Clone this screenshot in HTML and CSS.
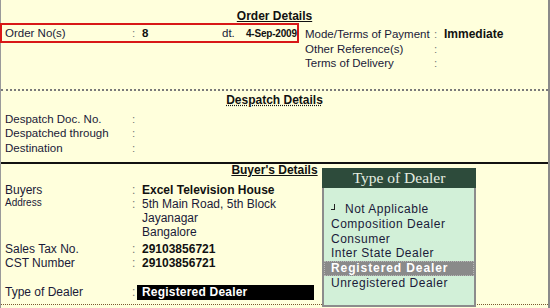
FILE: index.html
```html
<!DOCTYPE html>
<html lang="en">
<head>
    <meta charset="UTF-8">
    <title>Order Details</title>
    <link rel="stylesheet" href="styles.css">
</head>
<body>
    <div class="voucher">
        <section class="order">
            <h2 class="section-title">Order Details</h2>
            <div class="order-grid">
                <div class="order-no">
                    <span>Order No(s)</span>
                    <span class="colon">:</span>
                    <span class="value">8</span>
                    <span>dt.</span>
                    <span class="date">4-Sep-2009</span>
                </div>
                <div class="order-terms">
                    <span>Mode/Terms of Payment</span><span class="colon">:</span><span class="value">Immediate</span>
                    <span>Other Reference(s)</span><span class="colon">:</span><span></span>
                    <span>Terms of Delivery</span><span class="colon">:</span><span></span>
                </div>
            </div>
        </section>

        <section class="despatch">
            <h2 class="section-title dotted">Despatch Details</h2>
            <div class="rows">
                <span>Despatch Doc. No.</span><span class="colon">:</span><span></span>
                <span>Despatched through</span><span class="colon">:</span><span></span>
                <span>Destination</span><span class="colon">:</span><span></span>
            </div>
        </section>

        <section class="buyer">
            <h2 class="section-title">Buyer's Details</h2>
            <div class="rows">
                <span>Buyers</span><span class="colon">:</span><span class="value">Excel Television House</span>
                <span class="small">Address</span><span class="colon">:</span>
                <span class="address">5th Main Road, 5th Block<br>Jayanagar<br>Bangalore</span>
                <span class="gap">Sales Tax No.</span><span class="colon gap">:</span><span class="value gap">29103856721</span>
                <span>CST Number</span><span class="colon">:</span><span class="value">29103856721</span>
                <span class="gap-lg">Type of Dealer</span><span class="colon gap-lg">:</span><span class="value selected gap-lg">Registered Dealer</span>
            </div>
        </section>

        <div class="popup">
            <div class="popup-head">Type of Dealer</div>
            <ul class="popup-list">
                <li><span class="end-mark"></span>Not Applicable</li>
                <li>Composition Dealer</li>
                <li>Consumer</li>
                <li>Inter State Dealer</li>
                <li class="current">Registered Dealer</li>
                <li>Unregistered Dealer</li>
            </ul>
        </div>
    </div>
</body>
</html>
```

FILE: styles.css
```css
body {
    margin: 0;
    font-family: "Liberation Sans", Arial, sans-serif;
    color: #1a1a38;
    background: #fff;
}
.voucher {
    position: relative;
    width: 550px;
    height: 308px;
    box-sizing: border-box;
    background: #ffffdc;
    border-left: 1px solid #9a9a9a;
    border-right: 2px solid #8a8a8a;
}
.section-title {
    margin: 0;
    font-size: 12px;
    font-weight: bold;
    line-height: 14px;
    text-align: center;
    text-decoration: underline;
    color: #111;
}
.section-title.dotted {
    text-decoration-style: dotted;
}
.colon {
    color: #777;
}
.value {
    font-weight: bold;
    color: #111;
}

/* order */
.order {
    height: 89px;
    border-bottom: 2px dotted #7a7a7a;
}
.order .section-title {
    padding-top: 9px;
}
.order-grid {
    display: flex;
    align-items: flex-start;
}
.order-no {
    width: 299px;
    height: 20px;
    box-sizing: border-box;
    margin-left: -1px;
    padding: 0 0 0 3px;
    border: 2px solid #d81818;
    display: grid;
    grid-template-columns: 127px 10px 80px 24px 1fr;
    align-items: baseline;
    font-size: 11.5px;
    line-height: 16px;
    white-space: nowrap;
}
.order-no .date {
    font-size: 10px;
    font-weight: bold;
    letter-spacing: -0.2px;
    color: #111;
}
.order-terms {
    padding: 4px 0 0 6px;
    display: grid;
    grid-template-columns: 129px 10px auto;
    font-size: 11.5px;
    line-height: 14.5px;
}
.order-terms .value {
    font-size: 12px;
}

/* despatch */
.despatch {
    height: 69px;
    border-bottom: 2px solid #111;
}
.despatch .section-title {
    margin-top: 2px;
}
.rows {
    display: grid;
    grid-template-columns: 127px 5px auto;
    padding-left: 4px;
}
.rows > span:nth-child(3n) {
    padding-left: 5px;
}
.despatch .rows {
    margin-top: 5px;
    font-size: 11.5px;
    line-height: 14.3px;
}

/* buyer */
.buyer {
    height: 140px;
    border-bottom: 1px dotted #7a5a30;
}
.buyer .section-title {
    line-height: 13px;
}
.buyer .rows {
    margin-top: 6px;
    font-size: 12px;
    line-height: 14px;
}
.buyer .small {
    font-size: 10px;
    line-height: 12px;
}
.buyer .gap {
    margin-top: 3px;
}
.buyer .gap-lg {
    margin-top: 15px;
}
.buyer .selected {
    width: 177px;
    box-sizing: border-box;
    background: #000;
    color: #fff;
    padding-bottom: 1px;
    letter-spacing: 0.2px;
}

/* popup list */
.popup {
    position: absolute;
    left: 321px;
    top: 168px;
    width: 154px;
    height: 139px;
    box-sizing: border-box;
    background: #d2f0d8;
    border: 2px solid #8c8c8c;
    border-top: none;
}
.popup-head {
    height: 20px;
    margin: 0 -2px;
    background: #2d4b3b;
    color: #e6efe2;
    font-family: "Liberation Serif", "Times New Roman", serif;
    font-size: 15.5px;
    line-height: 20px;
    text-align: center;
}
.popup-list {
    list-style: none;
    margin: 0;
    padding: 14px 0 0;
    font-size: 12px;
    line-height: 14.8px;
    letter-spacing: 0.5px;
}
.popup-list li {
    padding-left: 7px;
}
.popup-list .current {
    background: #8a8a8a;
    color: #fff;
    font-weight: bold;
    letter-spacing: 0.9px;
    outline: 1px dotted #b8b8b8;
    outline-offset: -1px;
}
.end-mark {
    display: inline-block;
    width: 3px;
    height: 5px;
    margin: 0 10px 5px 0;
    border-right: 1px solid #222;
    border-bottom: 1px solid #222;
    vertical-align: middle;
}
```
